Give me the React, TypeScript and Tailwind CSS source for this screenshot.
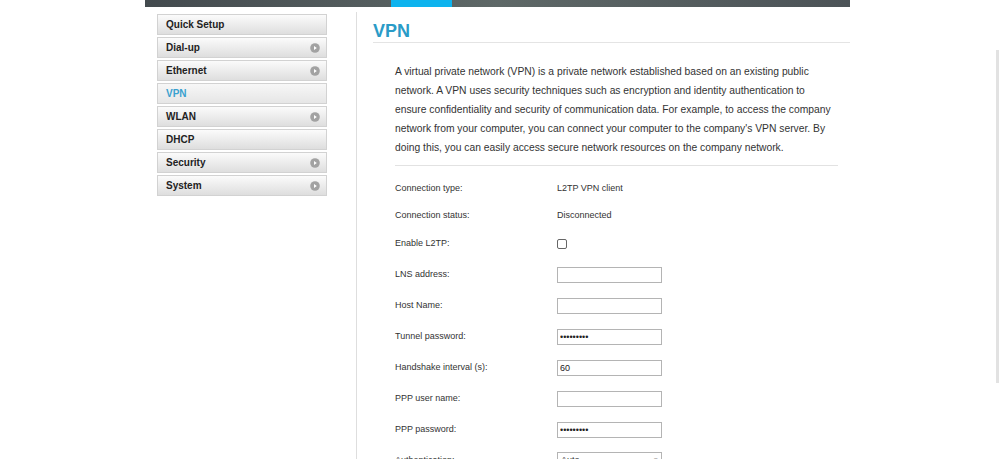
import React from 'react'

const navItems = [
  { label: 'Quick Setup', arrow: false },
  { label: 'Dial-up', arrow: true },
  { label: 'Ethernet', arrow: true },
  { label: 'VPN', arrow: false, active: true },
  { label: 'WLAN', arrow: true },
  { label: 'DHCP', arrow: false },
  { label: 'Security', arrow: true },
  { label: 'System', arrow: true },
]

function Arrow() {
  return (
    <svg width="10" height="10" viewBox="0 0 10 10" className="shrink-0">
      <circle cx="5" cy="5" r="4.8" fill="#a2a2a2" />
      <path d="M4 2.9 L6.8 5 L4 7.1 Z" fill="#ffffff" />
    </svg>
  )
}

function Field({ value = '', password = false }: { value?: string; password?: boolean }) {
  return (
    <input
      readOnly
      type={password ? 'password' : 'text'}
      defaultValue={value}
      className="h-[16px] w-[105px] border border-[#b4b4b4] bg-white px-[2px] text-[9px] text-[#222] outline-none"
    />
  )
}

function Row({ label, h, children }: { label: string; h: string; children?: React.ReactNode }) {
  return (
    <div className={`flex items-center ${h}`}>
      <div className="w-[162px] shrink-0 text-[9px] text-[#333]">{label}</div>
      <div className="flex items-center text-[9px] text-[#333]">{children}</div>
    </div>
  )
}

export default function App() {
  return (
    <div className="relative h-[459px] w-full overflow-hidden bg-white font-['Liberation_Sans',Arial,sans-serif]">
      <div className="ml-[145px] w-[705px]">
        {/* top bar */}
        <div className="h-[7px] bg-gradient-to-r from-[#434a4e] via-[#5e6867] to-[#4c5357]">
          <div className="ml-[246px] h-full w-[61px] bg-[#0db3ee]" />
        </div>

        <div className="flex">
          {/* sidebar */}
          <div className="w-[211px] shrink-0 pl-[12px] pt-[7px]">
            {navItems.map((item) => (
              <div
                key={item.label}
                className={`mb-[2px] flex h-[21px] w-[170px] items-center justify-between border border-[#d2d2d2] pl-[8px] pr-[6px] text-[10px] font-bold ${
                  item.active
                    ? 'bg-gradient-to-b from-[#f7f7f7] to-[#e6e6e6] text-[#3aa1cf]'
                    : 'bg-gradient-to-b from-[#fbfbfb] to-[#dedede] text-[#222]'
                }`}
              >
                <span>{item.label}</span>
                {item.arrow && <Arrow />}
              </div>
            ))}
          </div>

          {/* main */}
          <div className="mt-[5px] flex-1 border-l border-[#dedede] pl-[16px]">
            <h1 className="mt-[8px] h-[23px] border-b border-[#e4e4e4] text-[18px] font-bold leading-[22px] text-[#2a9bc7]">
              VPN
            </h1>

            <div className="mr-[12px] ml-[22px]">
              <p className="mt-[19px] border-b border-[#e2e2e2] pb-[8px] text-[10.3px] leading-[19px] text-[#333]">
                A virtual private network (VPN) is a private network established based on an existing public
                network. A VPN uses security techniques such as encryption and identity authentication to
                ensure confidentiality and security of communication data. For example, to access the company
                network from your computer, you can connect your computer to the company's VPN server. By
                doing this, you can easily access secure network resources on the company network.
              </p>

              <div className="mt-[9px]">
                <Row label="Connection type:" h="h-[27px]">L2TP VPN client</Row>
                <Row label="Connection status:" h="h-[27px]">Disconnected</Row>
                <Row label="Enable L2TP:" h="h-[30px]">
                  <span className="block h-[10px] w-[10px] rounded-[2px] border border-[#666] bg-white" />
                </Row>
                <Row label="LNS address:" h="h-[31px]">
                  <Field />
                </Row>
                <Row label="Host Name:" h="h-[31px]">
                  <Field />
                </Row>
                <Row label="Tunnel password:" h="h-[31px]">
                  <Field value="123456789" password />
                </Row>
                <Row label="Handshake interval (s):" h="h-[31px]">
                  <Field value="60" />
                </Row>
                <Row label="PPP user name:" h="h-[31px]">
                  <Field />
                </Row>
                <Row label="PPP password:" h="h-[31px]">
                  <Field value="123456789" password />
                </Row>
                <Row label="Authentication:" h="h-[31px]">
                  <div className="flex h-[17px] w-[105px] items-center justify-between border border-[#b4b4b4] bg-white px-[3px] text-[9px]">
                    <span>Auto</span>
                    <span className="text-[7px] text-[#888]">▾</span>
                  </div>
                </Row>
              </div>
            </div>
          </div>
        </div>
      </div>

      {/* page scrollbar */}
      <div className="absolute right-[1px] top-[50px] h-[333px] w-[3px] bg-[#e2e2e2]" />
    </div>
  )
}
